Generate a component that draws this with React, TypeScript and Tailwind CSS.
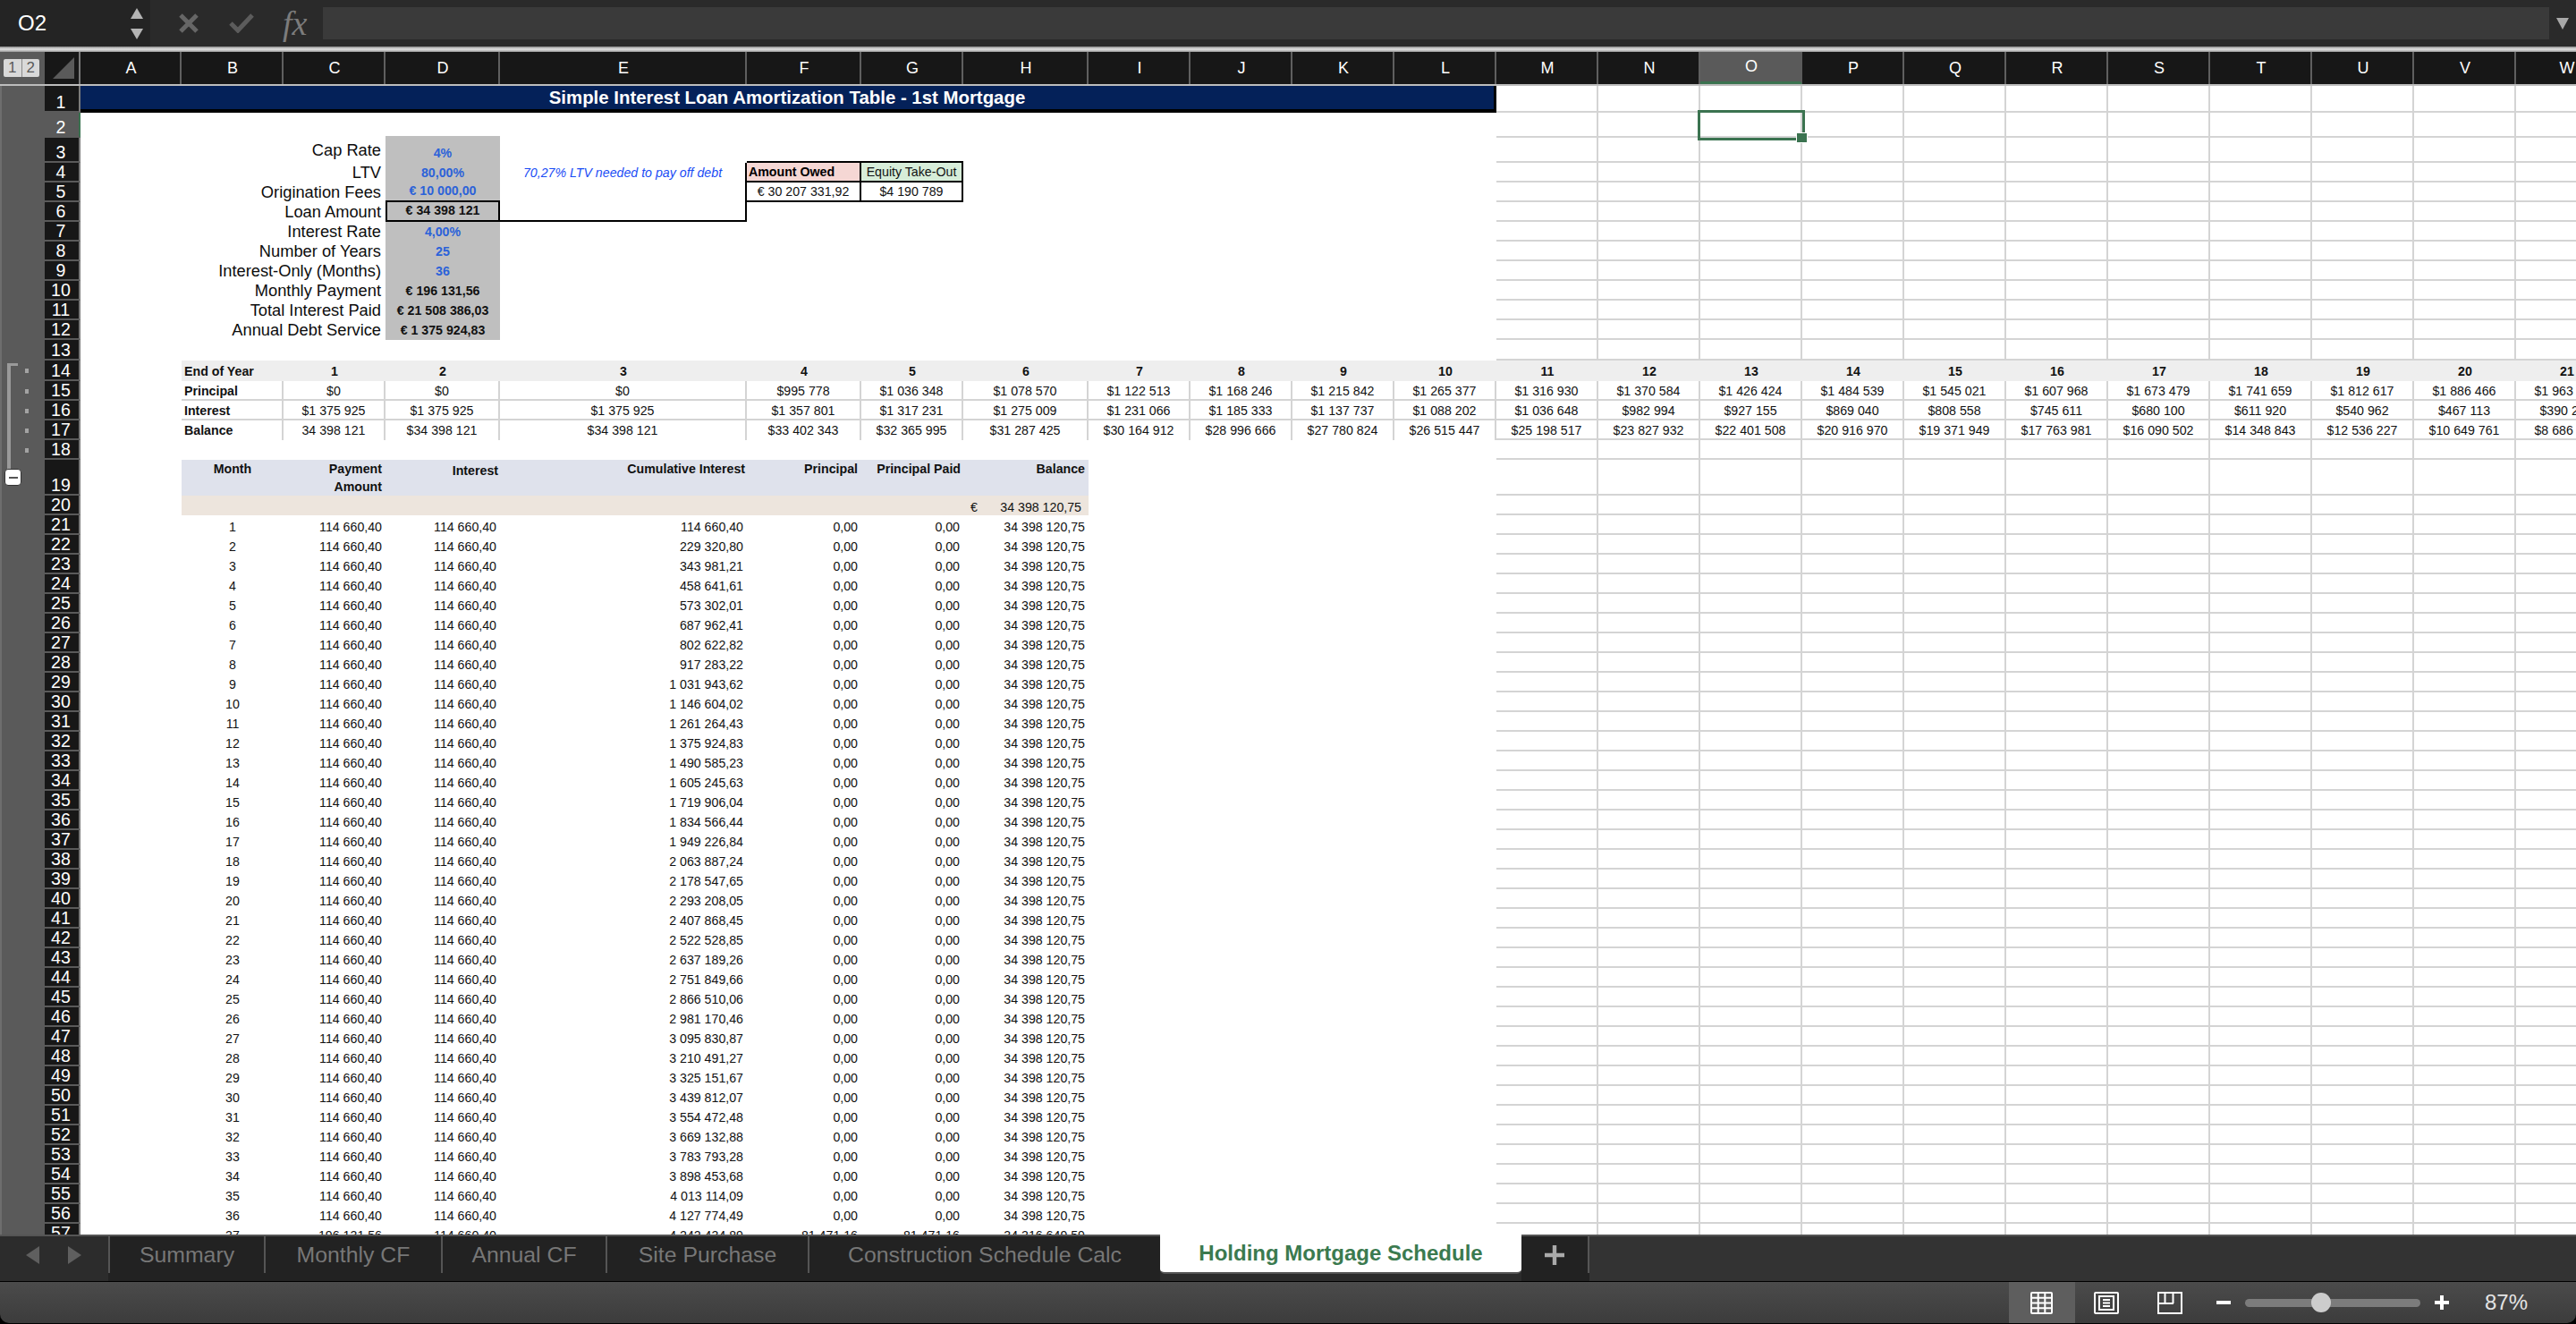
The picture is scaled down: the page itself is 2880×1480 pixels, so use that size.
import type { ReactNode } from 'react'

const GRID =
  'grid grid-rows-1 grid-cols-[113px_114px_114px_128px_276px_128px_114px_140px_114px_114px_114px_114px_114px_114px_114px_114px_114px_114px_114px_114px_114px_114px_114px]'

const COLUMNS = 'ABCDEFGHIJKLMNOPQRSTUVW'.split('')
const COL_WIDTHS = [
  'w-[113px]', 'w-[114px]', 'w-[114px]', 'w-[128px]', 'w-[276px]', 'w-[128px]', 'w-[114px]', 'w-[140px]',
  'w-[114px]', 'w-[114px]', 'w-[114px]', 'w-[114px]', 'w-[114px]', 'w-[114px]', 'w-[114px]', 'w-[114px]',
  'w-[114px]', 'w-[114px]', 'w-[114px]', 'w-[114px]', 'w-[114px]', 'w-[114px]', 'w-[114px]',
]

const LINE = 'border-[#d4d4d4]'

const PRINCIPAL = [
  '$0', '$0', '$0', '$995 778', '$1 036 348', '$1 078 570', '$1 122 513', '$1 168 246', '$1 215 842', '$1 265 377',
  '$1 316 930', '$1 370 584', '$1 426 424', '$1 484 539', '$1 545 021', '$1 607 968', '$1 673 479', '$1 741 659',
  '$1 812 617', '$1 886 466', '$1 963 360',
]
const INTEREST = [
  '$1 375 925', '$1 375 925', '$1 375 925', '$1 357 801', '$1 317 231', '$1 275 009', '$1 231 066', '$1 185 333',
  '$1 137 737', '$1 088 202', '$1 036 648', '$982 994', '$927 155', '$869 040', '$808 558', '$745 611', '$680 100',
  '$611 920', '$540 962', '$467 113', '$390 219',
]
const BALANCE = [
  '34 398 121', '$34 398 121', '$34 398 121', '$33 402 343', '$32 365 995', '$31 287 425', '$30 164 912',
  '$28 996 666', '$27 780 824', '$26 515 447', '$25 198 517', '$23 827 932', '$22 401 508', '$20 916 970',
  '$19 371 949', '$17 763 981', '$16 090 502', '$14 348 843', '$12 536 227', '$10 649 761', '$8 686 401',
]
const CUMULATIVE = [
  '114 660,40', '229 320,80', '343 981,21', '458 641,61', '573 302,01', '687 962,41', '802 622,82', '917 283,22',
  '1 031 943,62', '1 146 604,02', '1 261 264,43', '1 375 924,83', '1 490 585,23', '1 605 245,63', '1 719 906,04',
  '1 834 566,44', '1 949 226,84', '2 063 887,24', '2 178 547,65', '2 293 208,05', '2 407 868,45', '2 522 528,85',
  '2 637 189,26', '2 751 849,66', '2 866 510,06', '2 981 170,46', '3 095 830,87', '3 210 491,27', '3 325 151,67',
  '3 439 812,07', '3 554 472,48', '3 669 132,88', '3 783 793,28', '3 898 453,68', '4 013 114,09', '4 127 774,49',
]

const SUMMARY = [
  { label: 'Cap Rate', value: '4%', blue: true, row: 3 },
  { label: 'LTV', value: '80,00%', blue: true, row: 4 },
  { label: 'Origination Fees', value: '€ 10 000,00', blue: true, row: 5 },
  { label: 'Loan Amount', value: '€ 34 398 121', blue: false, row: 6 },
  { label: 'Interest Rate', value: '4,00%', blue: true, row: 7 },
  { label: 'Number of Years', value: '25', blue: true, row: 8 },
  { label: 'Interest-Only (Months)', value: '36', blue: true, row: 9 },
  { label: 'Monthly Payment', value: '€ 196 131,56', blue: false, row: 10 },
  { label: 'Total Interest Paid', value: '€ 21 508 386,03', blue: false, row: 11 },
  { label: 'Annual Debt Service', value: '€ 1 375 924,83', blue: false, row: 12 },
]

const TABS = [
  { name: 'Summary', width: 'w-[174px]' },
  { name: 'Monthly CF', width: 'w-[198px]' },
  { name: 'Annual CF', width: 'w-[184px]' },
  { name: 'Site Purchase', width: 'w-[226px]' },
  { name: 'Construction Schedule Calc', width: 'w-[394px]' },
]

// empty cells M..W, the only part of the sheet that still shows gridlines
function Gridlines() {
  return (
    <>
      {COLUMNS.slice(12).map((c) => (
        <div key={c} className={`border-r-2 border-b-2 ${LINE}`} />
      ))}
    </>
  )
}

function Row({
  num,
  height,
  dot,
  selected,
  children,
}: {
  num: number
  height: string
  dot?: boolean
  selected?: boolean
  children: ReactNode
}) {
  return (
    <div className={`flex shrink-0 ${height}`}>
      <div className="w-[50px] shrink-0 flex items-center justify-end pr-[18px] bg-[#5a5a5a] border-l-2 border-[#6e6e6e]">
        {dot && <div className="w-[4px] h-[5px] bg-[#a3a3a3]" />}
      </div>
      <div
        className={`w-[40px] shrink-0 flex items-end justify-center pr-[2px] border-b-2 border-r-2 border-b-[#5a5a5a] text-white text-[19.6px] leading-[20px] ${
          selected ? 'bg-[#5a5a5a] border-r-[#3b7350]' : 'bg-[#171717] border-r-[#7a7a7a]'
        }`}
      >
        {num}
      </div>
      <div className={`${GRID} flex-1 bg-white text-[#111] text-[14.2px] whitespace-nowrap`}>{children}</div>
    </div>
  )
}

function MonthCells({ values }: { values: string[] }) {
  return (
    <>
      <div />
      <div className="text-center self-end leading-[18px]">{values[0]}</div>
      {values.slice(1).map((v, i) => (
        <div key={i} className="text-right self-end leading-[18px] pr-1">
          {v}
        </div>
      ))}
      <div />
      <div />
      <div />
      <div />
      <Gridlines />
    </>
  )
}

function YearRow({ num, label, values, last }: { num: number; label: string; values: string[]; last?: boolean }) {
  return (
    <Row num={num} height="h-[22px]" dot>
      <div />
      <div className={`pl-[3px] font-bold leading-[22px] border-r-2 ${LINE} ${last ? '' : 'border-b-2'}`}>{label}</div>
      {values.map((v, i) => (
        <div
          key={i}
          className={`text-center leading-[22px] border-r-2 ${LINE} ${last && i < 10 ? '' : 'border-b-2'}`}
        >
          {v}
        </div>
      ))}
    </Row>
  )
}

function SummaryRow({ row }: { row: (typeof SUMMARY)[number] }) {
  const isLoan = row.row === 6
  return (
    <Row num={row.row} height={row.row === 3 ? 'h-[28px]' : 'h-[22px]'}>
      <div />
      <div className="col-span-2 text-right pr-[5px] text-[18.3px] text-[#0d0d0d] self-center leading-[22px]">
        {row.label}
      </div>
      <div
        className={`bg-[#bfbfbf] text-center font-bold self-stretch flex items-end justify-center leading-[22px] ${
          row.blue ? 'text-[#2b62d9]' : 'text-[#111]'
        } ${isLoan ? 'border-2 border-t-0 border-black' : ''} ${row.row === 5 ? 'border-b-2 border-black' : ''}`}
      >
        {row.value}
      </div>
      {row.row === 3 ? (
        <>
          <div />
          <div className="border-b-2 border-black" />
          <div className="border-b-2 border-black" />
        </>
      ) : row.row === 4 ? (
        <>
          <div className="text-center italic text-[#1a4cf5] border-r-2 border-black leading-[22px]">
            70,27% LTV needed to pay off debt
          </div>
          <div className="bg-[#f5d7d4] font-bold text-black pl-[2px] border-r-2 border-b-2 border-black leading-[20px]">
            Amount Owed
          </div>
          <div className="bg-[#d7edd9] text-center border-r-2 border-b-2 border-black leading-[20px]">
            Equity Take-Out
          </div>
        </>
      ) : row.row === 5 ? (
        <>
          <div className="border-r-2 border-black" />
          <div className="text-center border-r-2 border-b-2 border-black leading-[20px]">€ 30 207 331,92</div>
          <div className="text-center border-r-2 border-b-2 border-black leading-[20px]">$4 190 789</div>
        </>
      ) : isLoan ? (
        <>
          <div className="border-r-2 border-b-2 border-black" />
          <div />
          <div />
        </>
      ) : (
        <>
          <div />
          <div />
          <div />
        </>
      )}
      <div />
      <div />
      <div />
      <div />
      <div />
      <Gridlines />
    </Row>
  )
}

function Triangle({ dir, className }: { dir: 'up' | 'down' | 'left' | 'right'; className: string }) {
  const pts = { up: '7,0 14,14 0,14', down: '0,0 14,0 7,14', left: '14,0 14,14 0,7', right: '0,0 14,7 0,14' }[dir]
  return (
    <svg viewBox="0 0 14 14" preserveAspectRatio="none" className={className}>
      <polygon points={pts} fill="currentColor" />
    </svg>
  )
}

function FormulaBar() {
  return (
    <div className="h-[52px] shrink-0 flex bg-[#2a2a2a]">
      <div className="w-[168px] shrink-0 flex items-center justify-between pl-[20px] pr-[8px] bg-[#242424] text-white text-[24px]">
        <span>O2</span>
        <div className="flex flex-col gap-[11px] text-[#b4b4b4]">
          <Triangle dir="up" className="w-[14px] h-[12px]" />
          <Triangle dir="down" className="w-[14px] h-[12px]" />
        </div>
      </div>
      <div className="w-[193px] shrink-0 flex items-center">
        <svg viewBox="0 0 22 22" className="ml-[32px] w-[22px] h-[22px] text-[#666]">
          <path d="M2 2 L20 20 M20 2 L2 20" stroke="currentColor" strokeWidth="5" />
        </svg>
        <svg viewBox="0 0 28 22" className="ml-[34px] w-[28px] h-[22px] text-[#5c5c5c]">
          <path d="M2 11 L10 19 L26 2" stroke="currentColor" strokeWidth="5" fill="none" />
        </svg>
        <span className="ml-[32px] text-[38px] leading-none italic text-[#7c7c7c] font-['Liberation_Serif',serif]">fx</span>
      </div>
      <div className="flex-1 my-[8px] bg-[#3a3a3a]" />
      <div className="w-[30px] shrink-0 flex items-center justify-center text-[#a8a8a8]">
        <Triangle dir="down" className="w-[14px] h-[13px]" />
      </div>
    </div>
  )
}

function ColumnHeaders() {
  return (
    <div className="flex h-[38px] shrink-0 border-b-2 border-[#bdbdbd]">
      <div className="w-[50px] shrink-0 bg-[#5a5a5a] flex items-center pl-[4px]">
        <div className="flex w-[40px] h-[20px] bg-[#d9d9d9] rounded-[2px] text-[#5a5a5a] text-[17px] leading-[20px] text-center">
          <span className="flex-1 border-r border-[#8a8a8a]">1</span>
          <span className="flex-1">2</span>
        </div>
      </div>
      <div className="w-[40px] shrink-0 bg-[#171717] flex items-center justify-end pr-[5px] border-r-2 border-[#7a7a7a]">
        <svg viewBox="0 0 24 24" className="w-[24px] h-[24px]">
          <polygon points="24,0 24,24 0,24" fill="#5a5a5a" />
        </svg>
      </div>
      {COLUMNS.map((c, i) => (
        <div
          key={c}
          className={`${COL_WIDTHS[i]} shrink-0 flex items-center justify-center pl-[2px] text-white text-[18px] border-r-2 ${
            c === 'O' ? 'bg-[#5a5a5a] border-b-[3px] border-b-[#3b7350] border-r-[#5a5a5a]' : 'bg-[#171717] border-r-[#5f5f5f]'
          }`}
        >
          {c}
        </div>
      ))}
    </div>
  )
}

function Sheet() {
  return (
    <div className="relative flex-1 min-h-0 overflow-hidden flex flex-col">
      <Row num={1} height="h-[30px]">
        <div className="col-span-12 bg-[#042159] border-r-[3px] border-b-[4px] border-black text-white font-bold text-[20.4px] text-center leading-[26px]">
          Simple Interest Loan Amortization Table - 1st Mortgage
        </div>
        <Gridlines />
      </Row>

      <Row num={2} height="h-[28px]" selected>
        <div />
        <div />
        <div />
        <div className="self-end h-[2px] bg-[#bfbfbf]" />
        <div className="col-span-8" />
        {COLUMNS.slice(12).map((c) =>
          c === 'O' ? (
            <div key={c} className={`relative border-r-2 border-b-2 ${LINE}`}>
              <div className="absolute -left-[3px] -top-[3px] w-[120px] h-[34px] border-[3px] border-[#3b7350]" />
              <div className="absolute left-[107px] top-[22px] w-[13px] h-[12px] bg-[#3b7350] border border-white" />
            </div>
          ) : (
            <div key={c} className={`border-r-2 border-b-2 ${LINE}`} />
          )
        )}
      </Row>

      {SUMMARY.map((s) => (
        <SummaryRow key={s.row} row={s} />
      ))}

      <Row num={13} height="h-[23px]">
        <div className="col-span-12" />
        <Gridlines />
      </Row>

      <Row num={14} height="h-[23px]" dot>
        <div />
        <div className="bg-[#eeeeee] pl-[3px] font-bold leading-[24px]">End of Year</div>
        {PRINCIPAL.map((_, i) => (
          <div key={i} className="bg-[#eeeeee] text-center font-bold leading-[24px]">
            {i + 1}
          </div>
        ))}
      </Row>
      <YearRow num={15} label="Principal" values={PRINCIPAL} />
      <YearRow num={16} label="Interest" values={INTEREST} />
      <YearRow num={17} label="Balance" values={BALANCE} last />

      <Row num={18} height="h-[22px]" dot>
        <div className="col-span-12" />
        <Gridlines />
      </Row>

      <Row num={19} height="h-[40px]">
        <div />
        <div className="bg-[#dfe2ec] font-bold text-center leading-[20px]">Month</div>
        <div className="bg-[#dfe2ec] font-bold text-right pr-[4px] leading-[20px]">
          Payment
          <br />
          Amount
        </div>
        <div className="bg-[#dfe2ec] font-bold text-right pr-[2px] pt-[2px] leading-[20px]">Interest</div>
        <div className="bg-[#dfe2ec] font-bold text-right pr-[2px] leading-[20px]">Cumulative Interest</div>
        <div className="bg-[#dfe2ec] font-bold text-right pr-1 leading-[20px]">Principal</div>
        <div className="bg-[#dfe2ec] font-bold text-right pr-[3px] leading-[20px]">Principal Paid</div>
        <div className="bg-[#dfe2ec] font-bold text-right pr-1 leading-[20px]">Balance</div>
        <div />
        <div />
        <div />
        <div />
        <Gridlines />
      </Row>

      <Row num={20} height="h-[22px]">
        <div />
        <div className="col-span-6 bg-[#ede5dd]" />
        <div className="bg-[#ede5dd] flex justify-between items-end pl-[8px] pr-[8px] leading-[18px]">
          <span>€</span>
          <span>34 398 120,75</span>
        </div>
        <div />
        <div />
        <div />
        <div />
        <Gridlines />
      </Row>

      {CUMULATIVE.map((cum, i) => (
        <Row key={i} num={21 + i} height="h-[22px]">
          <MonthCells values={[String(i + 1), '114 660,40', '114 660,40', cum, '0,00', '0,00', '34 398 120,75']} />
        </Row>
      ))}
      <Row num={57} height="h-[22px]">
        <MonthCells values={['37', '196 131,56', '114 660,40', '4 242 434,89', '81 471,16', '81 471,16', '34 316 649,59']} />
      </Row>

      {/* outline bracket for the grouped rows 14-18 */}
      <div className="absolute left-[8px] top-[310px] w-[4px] h-[120px] bg-[#9a9a9a]" />
      <div className="absolute left-[8px] top-[310px] w-[12px] h-[3px] bg-[#9a9a9a]" />
      <div className="absolute left-[5px] top-[428px] w-[19px] h-[19px] rounded-[4px] bg-white border border-[#333] flex items-center justify-center">
        <div className="w-[10px] h-[2px] bg-[#555]" />
      </div>
    </div>
  )
}

function TabBar() {
  return (
    <div className="h-[52px] shrink-0 flex bg-[#333333] text-[24px]">
      <div className="w-[121px] shrink-0 flex items-center gap-[32px] pl-[29px] pb-[9px] bg-[#2c2c2c] border-t-2 border-[#555]">
        <Triangle dir="left" className="w-[15px] h-[20px] text-[#5f5f5f]" />
        <Triangle dir="right" className="w-[15px] h-[20px] text-[#5f5f5f]" />
      </div>
      {TABS.map((t) => (
        <div key={t.name} className={`${t.width} shrink-0 border-t-2 border-[#555] bg-[#222222] flex flex-col`}>
          <div className="h-[41px] flex items-center justify-center text-[24.8px] text-[#777777] border-l-2 border-[#555]">
            {t.name}
          </div>
        </div>
      ))}
      <div className="w-[404px] shrink-0 bg-[#2c2c2c] flex flex-col">
        <div className="h-[44px] bg-white rounded-b-[5px] border-b-2 border-[#555] flex items-center justify-center font-bold text-[#3b7a4f]">
          Holding Mortgage Schedule
        </div>
      </div>
      <div className="w-[76px] shrink-0 border-t-2 border-[#555] bg-[#222222]">
        <div className="h-[41px] flex items-center justify-center border-r-2 border-[#555]">
          <svg viewBox="0 0 20 20" className="w-[22px] h-[22px] text-[#aaa]">
            <path d="M10 0 V20 M0 10 H20" stroke="currentColor" strokeWidth="4" />
          </svg>
        </div>
      </div>
      <div className="flex-1 border-t-2 border-[#555]" />
    </div>
  )
}

function StatusBar() {
  return (
    <div className="h-[48px] shrink-0 bg-black">
      <div className="h-[46px] mt-[1px] rounded-b-[10px] bg-linear-to-b from-[#4b4b4b] to-[#3c3c3c] flex items-center justify-end">
        <div className="w-[74px] h-full flex items-center justify-center bg-[#5e5e5e]">
          <svg viewBox="0 0 25 25" className="w-[25px] h-[25px] text-white" fill="none" stroke="currentColor" strokeWidth="2">
            <rect x="1" y="1" width="23" height="23" rx="1" />
            <path d="M8.7 1 V24 M16.3 1 V24 M1 6.7 H24 M1 12.5 H24 M1 18.3 H24" />
          </svg>
        </div>
        <svg viewBox="0 0 28 25" className="w-[28px] h-[25px] ml-[21px] text-white" fill="none" stroke="currentColor" strokeWidth="2">
          <rect x="1" y="1" width="26" height="23" rx="1" />
          <rect x="6" y="5" width="16" height="15" />
          <path d="M10 9 H18 M10 12.5 H18 M10 16 H18" />
        </svg>
        <svg viewBox="0 0 28 25" className="w-[28px] h-[25px] ml-[43px] text-white mr-[38px]" fill="none" stroke="currentColor" strokeWidth="2">
          <rect x="1" y="1" width="26" height="23" />
          <path d="M8.5 1 V13 M17.5 1 V13 M1 13 H18" />
        </svg>
        <div className="w-[16px] h-[4px] bg-white" />
        <div className="relative w-[196px] h-[9px] ml-[16px] rounded-full bg-[#7c7c7c]">
          <div className="absolute left-[74px] -top-[7px] w-[22px] h-[22px] rounded-full bg-[#cccccc]" />
        </div>
        <svg viewBox="0 0 16 16" className="w-[16px] h-[16px] ml-[16px] text-white">
          <path d="M8 0 V16 M0 8 H16" stroke="currentColor" strokeWidth="4" />
        </svg>
        <span className="ml-[40px] mr-[54px] text-[24px] text-[#e4e4e4]">87%</span>
      </div>
    </div>
  )
}

export default function App() {
  return (
    <div className="w-[2880px] h-[1480px] overflow-hidden flex flex-col bg-black font-['Liberation_Sans',sans-serif]">
      <FormulaBar />
      <div className="h-[6px] shrink-0 bg-linear-to-b from-[#8a8a8a] via-[#e4e4e4] to-[#9a9a9a]" />
      <ColumnHeaders />
      <Sheet />
      <TabBar />
      <StatusBar />
    </div>
  )
}
